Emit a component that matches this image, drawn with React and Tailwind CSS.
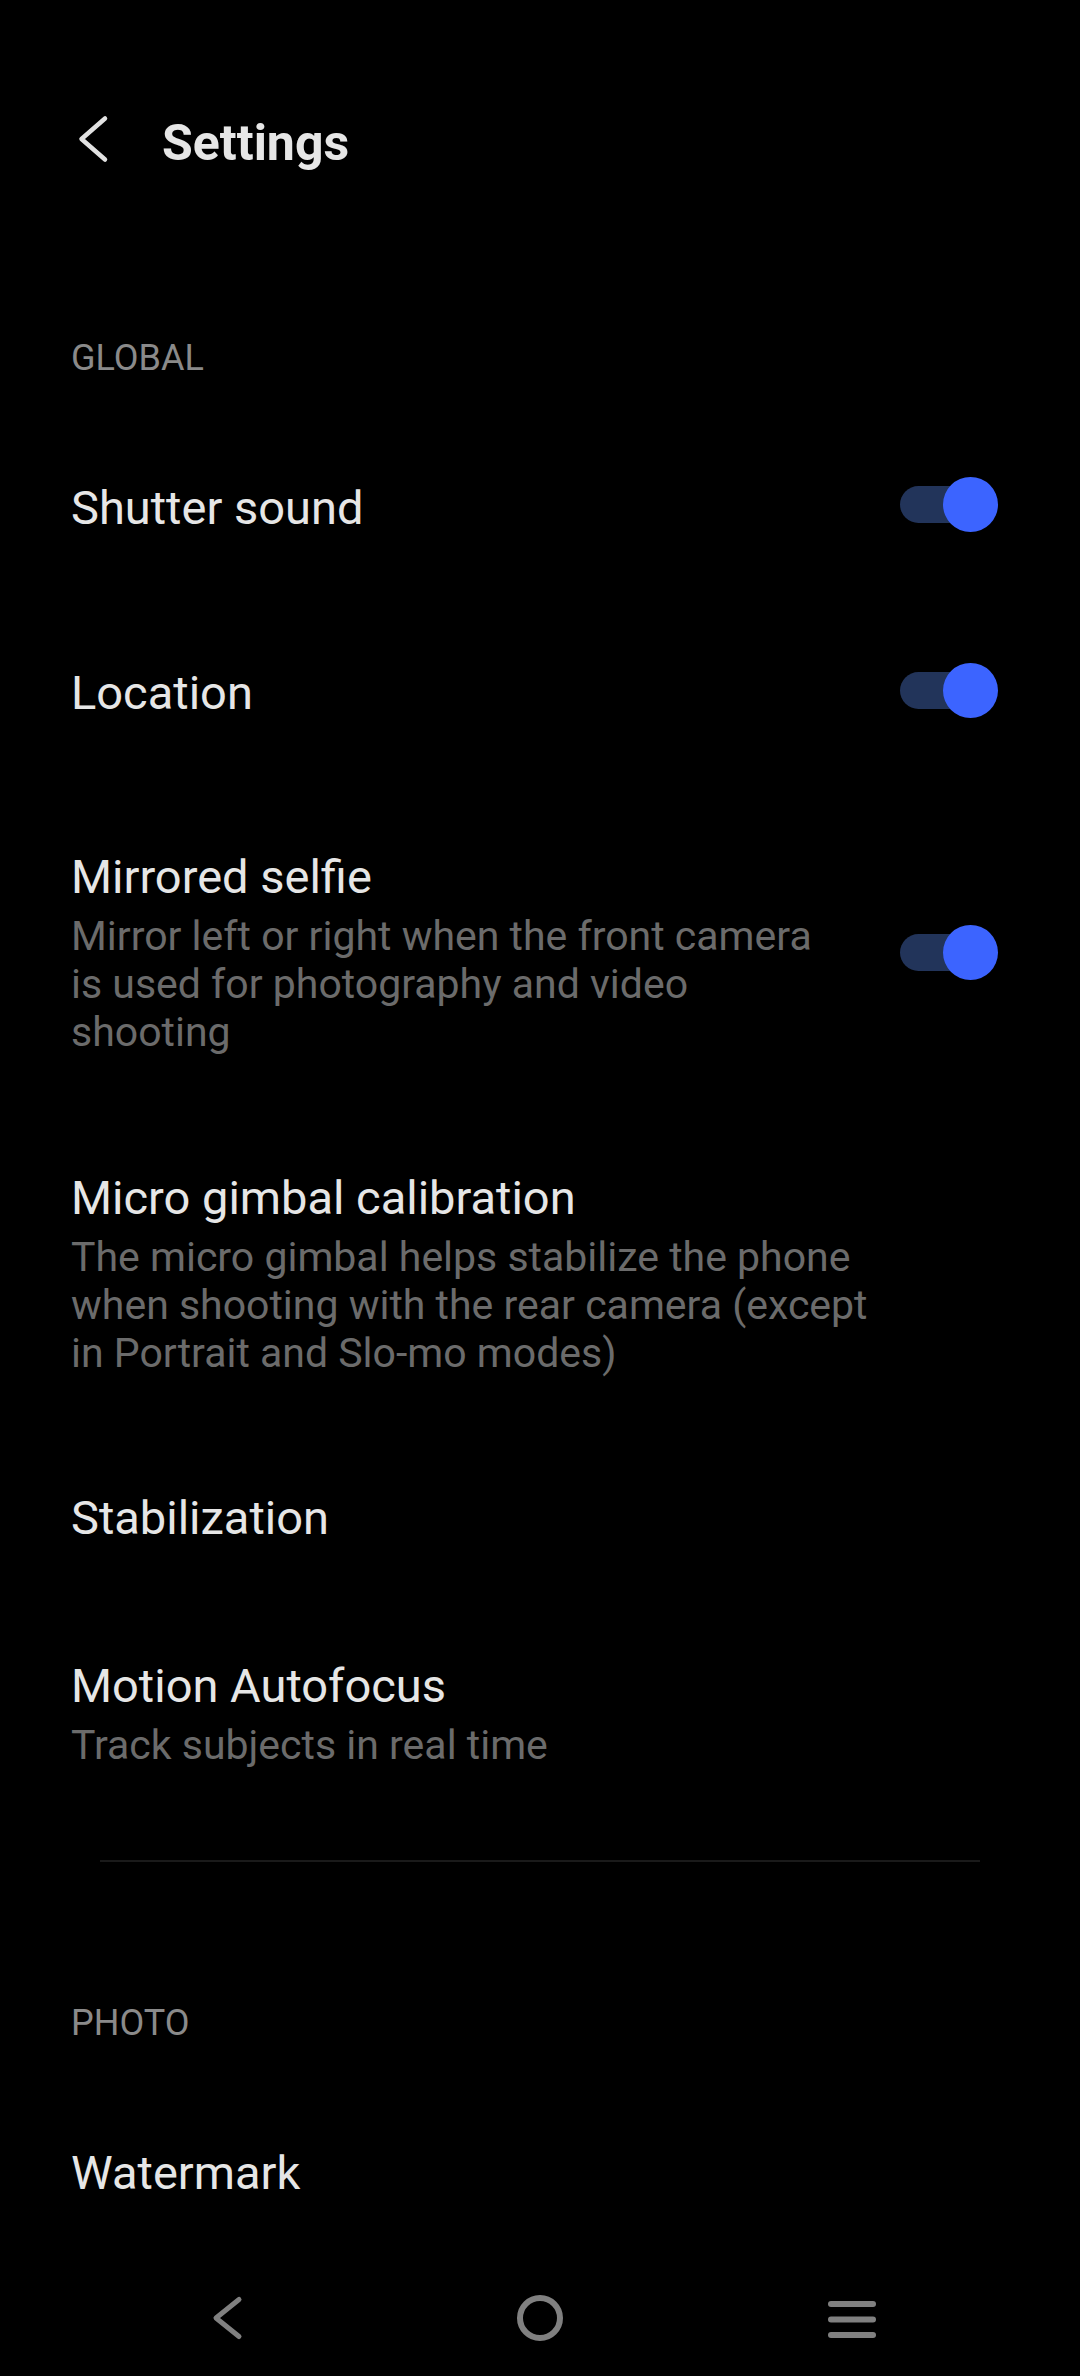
import React from "react";

const Toggle = ({ className }) => (
  <div className={`relative w-[98px] h-[55px] shrink-0 ${className}`}>
    <div className="absolute left-0 top-[9px] w-[88px] h-[37px] rounded-full bg-[#22345a]" />
    <div className="absolute right-0 top-0 w-[55px] h-[55px] rounded-full bg-[#3c64ff]" />
  </div>
);

const App = () => {
  return (
    <div className="h-[2376px] bg-black flex flex-col font-['Roboto','Liberation_Sans',sans-serif]">
      <div className="flex-1">
        {/* Header */}
        <div className="flex items-start pt-[115px] pl-[78px]">
          <svg width="32" height="48" viewBox="0 0 32 48" fill="none">
            <polyline
              points="27,3.5 3.5,24 27,44.5"
              stroke="#e2e2e2"
              strokeWidth="4.5"
              strokeLinecap="round"
              strokeLinejoin="round"
            />
          </svg>
          <h1 className="ml-[52px] text-[50px] leading-[56px] font-bold text-[#e6e6e6]">
            Settings
          </h1>
        </div>

        <div className="pl-[71px] pr-[82px]">
          {/* Global section */}
          <p className="mt-[167px] text-[36px] leading-[40px] text-[#8a8a8a]">
            GLOBAL
          </p>

          <div className="mt-[102px] flex items-center justify-between">
            <span className="text-[47px] leading-[56px] text-[#e6e6e6]">
              Shutter sound
            </span>
            <Toggle className="-translate-y-[4px]" />
          </div>

          <div className="mt-[129px] flex items-center justify-between">
            <span className="text-[47px] leading-[56px] text-[#e6e6e6]">
              Location
            </span>
            <Toggle className="-translate-y-[3px]" />
          </div>

          <div className="mt-[128px] flex items-center justify-between">
            <div className="w-[765px]">
              <p className="text-[47px] leading-[56px] text-[#e6e6e6]">
                Mirrored selfie
              </p>
              <p className="mt-[7px] text-[41px] leading-[48px] text-[#6b6b6b]">
                Mirror left or right when the front camera is used for
                photography and video shooting
              </p>
            </div>
            <Toggle />
          </div>

          <div className="mt-[114px] max-w-[810px]">
            <p className="text-[47px] leading-[56px] text-[#e6e6e6]">
              Micro gimbal calibration
            </p>
            <p className="mt-[7px] text-[41px] leading-[48px] text-[#6b6b6b]">
              The micro gimbal helps stabilize the phone when shooting with the
              rear camera (except in Portrait and Slo-mo modes)
            </p>
          </div>

          <p className="mt-[113px] text-[47px] leading-[56px] text-[#e6e6e6]">
            Stabilization
          </p>

          <div className="mt-[112px]">
            <p className="text-[47px] leading-[56px] text-[#e6e6e6]">
              Motion Autofocus
            </p>
            <p className="mt-[7px] text-[41px] leading-[48px] text-[#6b6b6b]">
              Track subjects in real time
            </p>
          </div>
        </div>

        <div className="mt-[91px] px-[100px]">
          <div className="h-[2px] bg-[#1a1a1a]" />
        </div>

        <div className="pl-[71px] pr-[82px]">
          {/* Photo section */}
          <p className="mt-[141px] text-[36px] leading-[40px] text-[#8a8a8a]">
            PHOTO
          </p>
          <p className="mt-[102px] text-[47px] leading-[56px] text-[#e6e6e6]">
            Watermark
          </p>
        </div>
      </div>

      {/* Navigation bar */}
      <div className="h-[116px] flex items-center justify-center gap-[264px]">
        <svg width="48" height="48" viewBox="0 0 48 48" fill="none">
          <polyline
            points="35,5.5 12,24 35,42.5"
            stroke="#808080"
            strokeWidth="5"
            strokeLinecap="round"
            strokeLinejoin="round"
          />
        </svg>
        <svg width="48" height="48" viewBox="0 0 48 48" fill="none">
          <circle cx="24" cy="24" r="20" stroke="#808080" strokeWidth="6" />
        </svg>
        <svg width="48" height="48" viewBox="0 0 48 48" fill="#808080">
          <rect x="0" y="7" width="48" height="6" rx="3" />
          <rect x="0" y="22.5" width="48" height="6" rx="3" />
          <rect x="0" y="38" width="48" height="6" rx="3" />
        </svg>
      </div>
    </div>
  );
};

export default App;
